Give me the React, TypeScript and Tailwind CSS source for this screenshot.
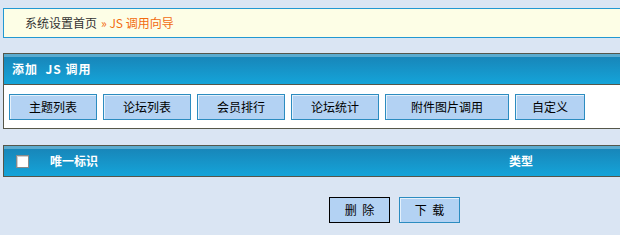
import React from 'react';

const font = { fontFamily: '"Noto Sans CJK SC", "Liberation Sans", sans-serif' };

const tabs = [
  { label: '主题列表', w: 'w-[88px]' },
  { label: '论坛列表', w: 'w-[88px]' },
  { label: '会员排行', w: 'w-[88px]' },
  { label: '论坛统计', w: 'w-[88px]' },
  { label: '附件图片调用', w: 'w-[124px]' },
  { label: '自定义', w: 'w-[70px]' },
];

const Header = ({ children }: { children: React.ReactNode }) => (
  <div className="h-[30px] shadow-[inset_0_3px_0_#5aabcf] bg-gradient-to-b from-[#1883b6] to-[#14a4d9] flex items-center text-white font-bold text-[12px]">
    {children}
  </div>
);

const App = () => {
  return (
    <div className="w-[620px] h-[235px] bg-[#dae5f3] overflow-hidden text-[12px] leading-none pt-[8px]" style={font}>
      <div className="ml-[3px] h-[30px] bg-[#fdfee6] border border-r-0 border-[#2298d2] flex items-center pl-[21px] text-[#333]">
        系统设置首页
        <span className="text-[#f26b0f] ml-[4px]">» JS 调用向导</span>
      </div>

      <div className="ml-[3px] mt-[15px] border border-r-0 border-[#55564a]">
        <Header>
          <span className="pl-[8px] tracking-[1px]">添加&nbsp;&nbsp;JS 调用</span>
        </Header>
        <div className="bg-white border-t border-[#55564a] pt-[9px] pb-[8px] pl-[5px] flex gap-[6px]">
          {tabs.map((t) => (
            <button
              key={t.label}
              className={`${t.w} h-[26px] bg-[#b3d2f3] border border-[#2c8cc0] shadow-[inset_1px_1px_0_#e4f0fb] text-black text-[12px]`}
            >
              {t.label}
            </button>
          ))}
        </div>
      </div>

      <div className="ml-[3px] mt-[16px] border border-r-0 border-[#55564a]">
        <Header>
          <span className="ml-[12px] w-[13px] h-[13px] bg-white border border-[#8a8a8a] shadow-[inset_1px_1px_0_#cfcfcf]" />
          <span className="ml-[21px] w-[459px]">唯一标识</span>
          <span>类型</span>
        </Header>
      </div>

      <div className="flex gap-[9px] pl-[329px] mt-[20px]">
        <button className="w-[61px] h-[26px] bg-[#b3d2f3] border border-black text-black text-[12px]">删&nbsp;&nbsp;除</button>
        <button className="w-[61px] h-[26px] bg-[#b3d2f3] border border-[#2c8cc0] shadow-[inset_1px_1px_0_#e4f0fb] text-black text-[12px]">下&nbsp;&nbsp;载</button>
      </div>
    </div>
  );
};

export default App;
